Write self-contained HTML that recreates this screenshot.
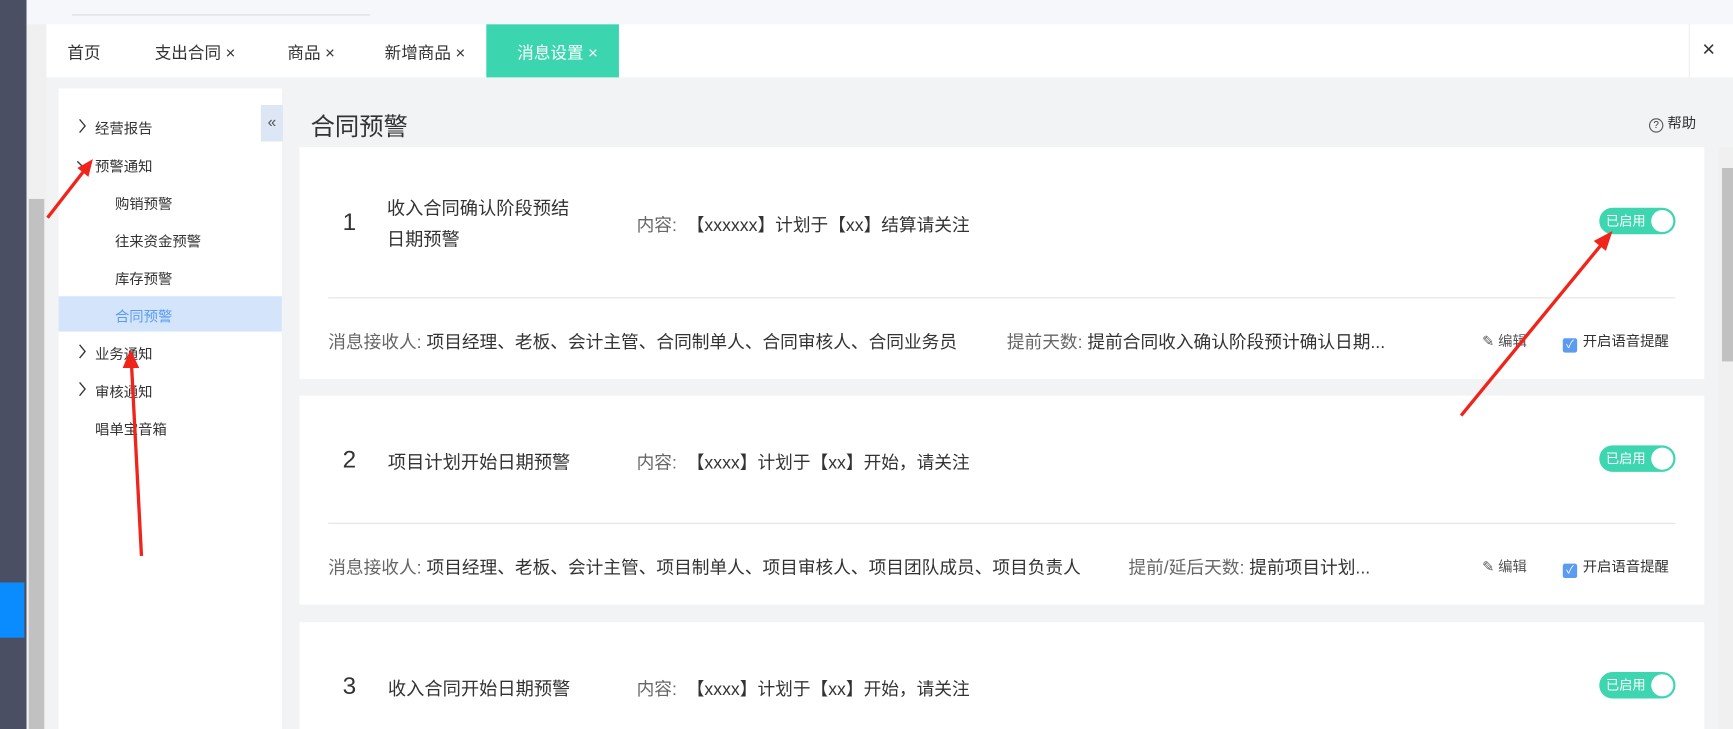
<!DOCTYPE html>
<html><head><meta charset="utf-8"><style>
html,body{margin:0;padding:0;width:1733px;height:729px;overflow:hidden;background:#f2f3f5}
#w{position:absolute;left:0;top:0;width:1568px;height:660px;transform:scale(1.10523);transform-origin:0 0;font-family:"Liberation Sans","Noto Sans CJK SC",sans-serif;color:#333;background:#f2f3f5;overflow:hidden}
.a{position:absolute;white-space:nowrap}
.mi{position:absolute;left:86px;font-size:13px;color:#333}
.card{position:absolute;left:271px;width:1271px;background:#fff}
.g{color:#666}
.tog{position:absolute;left:1176px;width:69px;height:24px;border-radius:12px;background:#3dd6b0;color:#fff;font-size:12px;line-height:24px}
.tog span{position:absolute;left:6px}
.tog i{position:absolute;right:2px;top:2px;width:20px;height:20px;border-radius:50%;background:#fff}
.cb{display:inline-block;width:13px;height:13px;background:#5b9cf0;border-radius:2px;vertical-align:-2px;margin-right:5px;color:#fff;font-size:10px;line-height:13px;text-align:center}
.chev{position:absolute;left:69px}
</style></head><body><div id="w">
<div class="a" style="left:0;top:0;width:24px;height:660px;background:#4b4f63"></div>
<div class="a" style="left:0;top:527px;width:22px;height:50px;background:#0a8cff"></div>
<div class="a" style="left:24px;top:22px;width:18px;height:638px;background:#f0f0f0"></div>
<div class="a" style="left:26px;top:180px;width:14px;height:480px;background:#c1c1c1"></div>
<div class="a" style="left:24px;top:0;width:1544px;height:22px;background:#f6f7fb"></div>
<div class="a" style="left:65px;top:13px;width:270px;height:1px;background:#ddd"></div>
<div class="a" style="left:42px;top:22px;width:1526px;height:48px;background:#fff"></div>
<div class="a" style="left:61px;top:37px;font-size:15px">首页</div>
<div class="a" style="left:140px;top:37px;font-size:15px">支出合同 ×</div>
<div class="a" style="left:260px;top:37px;font-size:15px">商品 ×</div>
<div class="a" style="left:348px;top:37px;font-size:15px">新增商品 ×</div>
<div class="a" style="left:440px;top:22px;width:120px;height:48px;background:#3bd5b0"></div>
<div class="a" style="left:468px;top:37px;font-size:15px;color:#fff">消息设置 ×</div>
<div class="a" style="left:1528px;top:22px;width:34px;height:48px;border-left:1px solid #eee;text-align:center;line-height:46px;font-size:20px;color:#333">×</div>
<div class="a" style="left:53px;top:80px;width:202px;height:580px;background:#fff"></div>
<div class="a" style="left:236px;top:95px;width:20px;height:33px;background:#dde6f5;color:#555;text-align:center;line-height:31px;font-size:14px">«</div>
<svg class="chev" style="top:107px" width="10" height="14"><path d="M3 1l5 6-5 6" fill="none" stroke="#333" stroke-width="1.2"/></svg>
<div class="mi" style="top:106px">经营报告</div>
<svg class="chev" style="top:144px" width="14" height="10"><path d="M1 2l6 6 6-6" fill="none" stroke="#333" stroke-width="1.2"/></svg>
<div class="mi" style="top:140px">预警通知</div>
<div class="mi" style="left:104px;top:174px">购销预警</div>
<div class="mi" style="left:104px;top:208px">往来资金预警</div>
<div class="mi" style="left:104px;top:242px">库存预警</div>
<div class="a" style="left:53px;top:268px;width:202px;height:32px;background:#d4e5fb"></div>
<div class="mi" style="left:104px;top:276px;color:#5b9cf0">合同预警</div>
<svg class="chev" style="top:311px" width="10" height="14"><path d="M3 1l5 6-5 6" fill="none" stroke="#333" stroke-width="1.2"/></svg>
<div class="mi" style="top:310px">业务通知</div>
<svg class="chev" style="top:345px" width="10" height="14"><path d="M3 1l5 6-5 6" fill="none" stroke="#333" stroke-width="1.2"/></svg>
<div class="mi" style="top:344px">审核通知</div>
<div class="mi" style="top:378px">唱单宝音箱</div>
<div class="a" style="left:281px;top:97px;font-size:22px">合同预警</div>
<div class="a" style="left:1492px;top:101px;font-size:13px"><span style="display:inline-block;width:11px;height:11px;border:1px solid #555;border-radius:50%;font-size:9px;text-align:center;line-height:11px;vertical-align:0">?</span> 帮助</div>
<div class="a" style="left:1555px;top:133px;width:13px;height:527px;background:#f0f0f0"></div>
<div class="a" style="left:1558px;top:152px;width:10px;height:175px;background:#c1c1c1"></div>

<div class="card" style="top:133px;height:210px">
 <div class="a" style="left:39px;top:55px;font-size:22px">1</div>
 <div class="a" style="left:79px;top:42px;font-size:16.5px;line-height:28px">收入合同确认阶段预结<br>日期预警</div>
 <div class="a" style="left:305px;top:57px;font-size:16px"><span class="g">内容:</span>&nbsp; 【xxxxxx】计划于【xx】结算请关注</div>
 <div class="tog" style="top:55px"><span>已启用</span><i></i></div>
 <div class="a" style="left:26px;top:136px;width:1219px;height:1px;background:#e3e3e3"></div>
 <div class="a" style="left:26px;top:163px;font-size:16px"><span class="g">消息接收人:</span> 项目经理、老板、会计主管、合同制单人、合同审核人、合同业务员</div>
 <div class="a" style="left:640px;top:163px;font-size:16px"><span class="g">提前天数:</span> 提前合同收入确认阶段预计确认日期...</div>
 <div class="a" style="left:1070px;top:165px;font-size:13px;color:#555">✎ 编辑</div>
 <div class="a" style="left:1143px;top:165px;font-size:13px"><span class="cb">✓</span>开启语音提醒</div>
</div>
<div class="card" style="top:358px;height:189px">
 <div class="a" style="left:39px;top:45px;font-size:22px">2</div>
 <div class="a" style="left:80px;top:47px;font-size:16.5px">项目计划开始日期预警</div>
 <div class="a" style="left:305px;top:47px;font-size:16px"><span class="g">内容:</span>&nbsp; 【xxxx】计划于【xx】开始，请关注</div>
 <div class="tog" style="top:45px"><span>已启用</span><i></i></div>
 <div class="a" style="left:26px;top:115px;width:1219px;height:1px;background:#e3e3e3"></div>
 <div class="a" style="left:26px;top:142px;font-size:16px"><span class="g">消息接收人:</span> 项目经理、老板、会计主管、项目制单人、项目审核人、项目团队成员、项目负责人</div>
 <div class="a" style="left:750px;top:142px;font-size:16px"><span class="g">提前/延后天数:</span> 提前项目计划...</div>
 <div class="a" style="left:1070px;top:144px;font-size:13px;color:#555">✎ 编辑</div>
 <div class="a" style="left:1143px;top:144px;font-size:13px"><span class="cb">✓</span>开启语音提醒</div>
</div>
<div class="card" style="top:563px;height:110px">
 <div class="a" style="left:39px;top:45px;font-size:22px">3</div>
 <div class="a" style="left:80px;top:47px;font-size:16.5px">收入合同开始日期预警</div>
 <div class="a" style="left:305px;top:47px;font-size:16px"><span class="g">内容:</span>&nbsp; 【xxxx】计划于【xx】开始，请关注</div>
 <div class="tog" style="top:45px"><span>已启用</span><i></i></div>
</div>
<svg class="a" style="left:0;top:0" width="1568" height="660">
 <g stroke="#f0241b" stroke-width="3" fill="#f0241b">
  <line x1="43" y1="197" x2="78" y2="152"/>
  <polygon points="84,144 70,152 80,160" stroke="none"/>
  <line x1="128" y1="503" x2="119" y2="330"/>
  <polygon points="118,316 111,333 126,333" stroke="none"/>
  <line x1="1322" y1="376" x2="1450" y2="220"/>
  <polygon points="1459,209 1442,218 1453,227" stroke="none"/>
 </g>
</svg>
</div></body></html>
